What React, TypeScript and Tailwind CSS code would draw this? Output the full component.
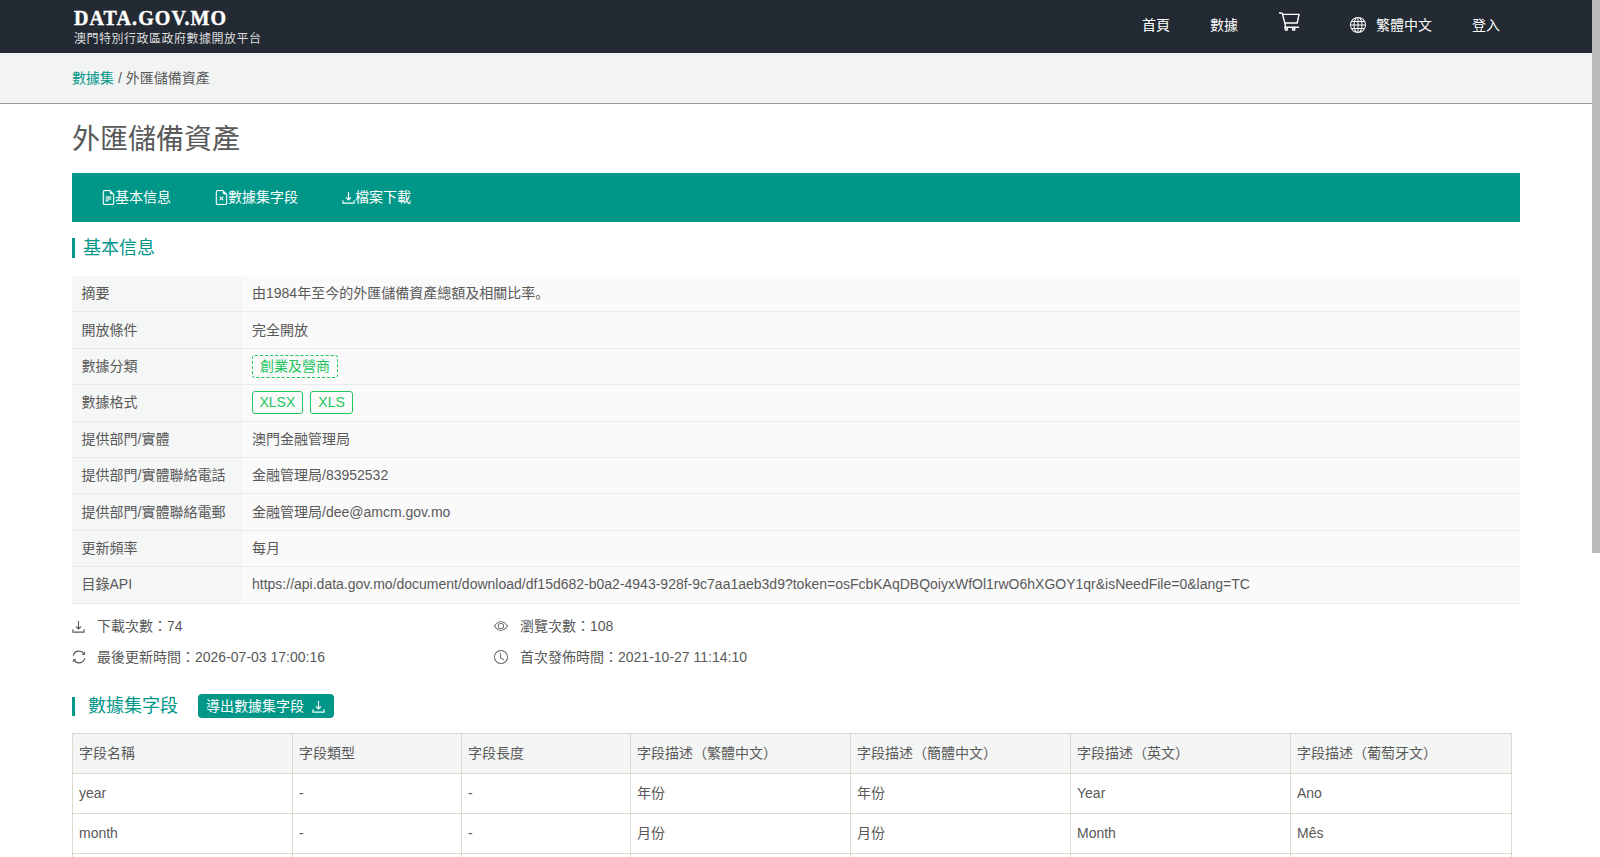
import { BsClock, BsEye, BsFileEarmarkText, BsFileEarmarkX, BsGlobe } from "react-icons/bs";

const infoRows = [
  { label: "摘要", value: "由1984年至今的外匯儲備資產總額及相關比率。", h: "h-[36px]" },
  { label: "開放條件", value: "完全開放", h: "h-[37px]" },
  { label: "數據分類", h: "h-[36px]", kind: "category" },
  { label: "數據格式", h: "h-[37px]", kind: "format", nudge: "pb-[1px]" },
  { label: "提供部門/實體", value: "澳門金融管理局", h: "h-[36px]" },
  { label: "提供部門/實體聯絡電話", value: "金融管理局/83952532", h: "h-[36px]" },
  { label: "提供部門/實體聯絡電郵", value: "金融管理局/dee@amcm.gov.mo", h: "h-[37px]" },
  { label: "更新頻率", value: "每月", h: "h-[36px]" },
  {
    label: "目錄API",
    value: "https://api.data.gov.mo/document/download/df15d682-b0a2-4943-928f-9c7aa1aeb3d9?token=osFcbKAqDBQoiyxWfOl1rwO6hXGOY1qr&isNeedFile=0&lang=TC",
    h: "h-[37px]",
    nudge: "pb-[1px]",
  },
];

const fieldHead = ["字段名稱", "字段類型", "字段長度", "字段描述（繁體中文）", "字段描述（簡體中文）", "字段描述（英文）", "字段描述（葡萄牙文）"];
const fieldRows = [
  ["year", "-", "-", "年份", "年份", "Year", "Ano"],
  ["month", "-", "-", "月份", "月份", "Month", "Mês"],
  ["", "", "", "", "", "", ""],
];
const colWidths = ["w-[220px]", "w-[169px]", "w-[169px]", "w-[220px]", "w-[220px]", "w-[220px]", "w-[221px]"];

function TrayDown({ className }: { className?: string }) {
  return (
    <svg viewBox="0 0 14 14" fill="none" stroke="currentColor" strokeWidth="1.2" className={className}>
      <path d="M7 1v8.5M4.4 7 7 9.6 9.6 7M1 10v3h12v-3" />
    </svg>
  );
}

function Refresh({ className }: { className?: string }) {
  return (
    <svg viewBox="0 0 14 14" fill="none" stroke="currentColor" strokeWidth="1.2" className={className}>
      <path d="M1.2 5.6A6 6 0 0 1 12 3.8M12.8 8.4A6 6 0 0 1 2 10.2" />
      <path d="M12.6 1.8v2.6H10M1.4 12.2V9.6H4" strokeWidth="1" />
    </svg>
  );
}

function Cart({ className }: { className?: string }) {
  return (
    <svg viewBox="0 0 21 19" fill="none" stroke="currentColor" strokeWidth="1.4" className={className}>
      <path d="M0 .7 3.3 1.3 6.7 14.6" />
      <path d="M3.6 2.4H20L18.2 11H5.6M5 15.2H20" />
      <circle cx="7.3" cy="17" r="1.2" />
      <circle cx="14.7" cy="17" r="1.2" />
    </svg>
  );
}

export default function App() {
  return (
    <div className="relative h-[857px] overflow-hidden bg-white text-[14px] text-[#595959] font-['Liberation_Sans','Noto_Sans_CJK_SC',sans-serif]">
      <header className="flex h-[53px] items-center justify-between bg-[#232a33] pl-[74px] pr-[100px] text-white">
        <div className="pt-[2px]">
          <div className="font-['Liberation_Serif',serif] text-[20px] leading-[18px] font-bold tracking-[1.1px] [-webkit-text-stroke:0.4px_white]">DATA.GOV.MO</div>
          <div className="text-[12px] leading-[16px] mt-[4px] tracking-[0.5px] text-[#ddd]">澳門特別行政區政府數據開放平台</div>
        </div>
        <nav className="flex items-center pb-[2px]">
          <a className="mr-[40px]">首頁</a>
          <a className="mr-[41px]">數據</a>
          <Cart className="mr-[50px] mb-[8px] h-[19px] w-[21px]" />
          <BsGlobe className="mr-[10px] mb-[2px] size-[16px]" />
          <a className="mr-[40px]">繁體中文</a>
          <a>登入</a>
        </nav>
      </header>

      <div className="flex h-[51px] items-center border-b border-[#999] bg-[#f2f4f3] px-[72px] pt-[1px]">
        <a className="text-[#009688]">數據集</a>
        <span className="ml-[4px]">/ 外匯儲備資產</span>
      </div>

      <main className="pl-[72px] pr-[80px]">
        <h1 className="mt-[18px] text-[28px] leading-[36px]">外匯儲備資產</h1>

        <nav className="mt-[15px] flex h-[49px] items-center bg-[#009688] pl-[29px] text-white">
          <a className="flex items-center mr-[43px]"><BsFileEarmarkText className="mr-[-1px] size-[15px]" stroke="currentColor" strokeWidth={0.25} />基本信息</a>
          <a className="flex items-center mr-[44px]"><BsFileEarmarkX className="mr-[-1px] size-[15px]" stroke="currentColor" strokeWidth={0.25} />數據集字段</a>
          <a className="flex items-center"><TrayDown className="size-[13px]" />檔案下載</a>
        </nav>

        <h2 className="mt-[16px] flex h-[20px] items-center border-l-[3px] border-[#009688] pl-[8px] text-[18px] text-[#009688]">基本信息</h2>

        <div className="mt-[18px]">
          {infoRows.map((row) => (
            <div key={row.label} className={`flex border-b border-[#e9eaea] ${row.h}`}>
              <div className={`flex w-[170px] items-center bg-[#f5f6f6] pl-[9.5px] ${row.nudge ?? ""}`}>{row.label}</div>
              <div className={`flex flex-1 items-center gap-[7px] bg-[#fafafa] pl-[10px] ${row.nudge ?? ""}`}>
                {row.kind === "category" && (
                  <span className="rounded-[3px] border border-dashed border-[#22c55e] px-[7px] leading-[21px] text-[#22c55e]">創業及營商</span>
                )}
                {row.kind === "format" && (
                  <>
                    <span className="rounded-[3px] border border-[#22c55e] px-[6.5px] leading-[21px] text-[#22c55e]">XLSX</span>
                    <span className="rounded-[3px] border border-[#22c55e] px-[7.5px] leading-[21px] text-[#22c55e]">XLS</span>
                  </>
                )}
                {row.value}
              </div>
            </div>
          ))}
        </div>

        <div className="mt-[12px] grid grid-cols-[422px_1fr] gap-y-[11px] leading-[20px] font-['Liberation_Sans','Noto_Sans_CJK_TC',sans-serif]">
          <div className="flex items-center gap-[12px]"><TrayDown className="size-[13px]" />下載次數：74</div>
          <div className="flex items-center gap-[12px]"><BsEye className="size-[14px]" />瀏覽次數：108</div>
          <div className="flex items-center gap-[11px]"><Refresh className="size-[14px]" />最後更新時間：2026-07-03 17:00:16</div>
          <div className="flex items-center gap-[12px]"><BsClock className="size-[14px]" />首次發佈時間：2021-10-27 11:14:10</div>
        </div>

        <div className="mt-[27px] flex items-center">
          <h2 className="flex h-[19px] items-center border-l-[3px] border-[#009688] pl-[13px] text-[18px] text-[#009688]">數據集字段</h2>
          <a className="ml-[20px] flex h-[24px] w-[136px] items-center justify-between rounded-[4px] bg-[#009688] pl-[8px] pr-[9px] text-white">導出數據集字段<TrayDown className="size-[13px]" /></a>
        </div>

        <table className="mt-[15px] table-fixed border-collapse w-[1439px]">
          <thead>
            <tr className="h-[40px] bg-[#f4f6f5]">
              {fieldHead.map((h, i) => (
                <th key={h} className={`border border-[#dadacd] pl-[6px] text-left font-normal ${colWidths[i]}`}>{h}</th>
              ))}
            </tr>
          </thead>
          <tbody>
            {fieldRows.map((row, r) => (
              <tr key={r} className="h-[40px]">
                {row.map((c, i) => (
                  <td key={i} className="border border-[#dadacd] pl-[6px]">{c}</td>
                ))}
              </tr>
            ))}
          </tbody>
        </table>
      </main>

      <div className="absolute right-0 top-0 h-[553px] w-[8px] bg-[#bbb]" />
    </div>
  );
}
